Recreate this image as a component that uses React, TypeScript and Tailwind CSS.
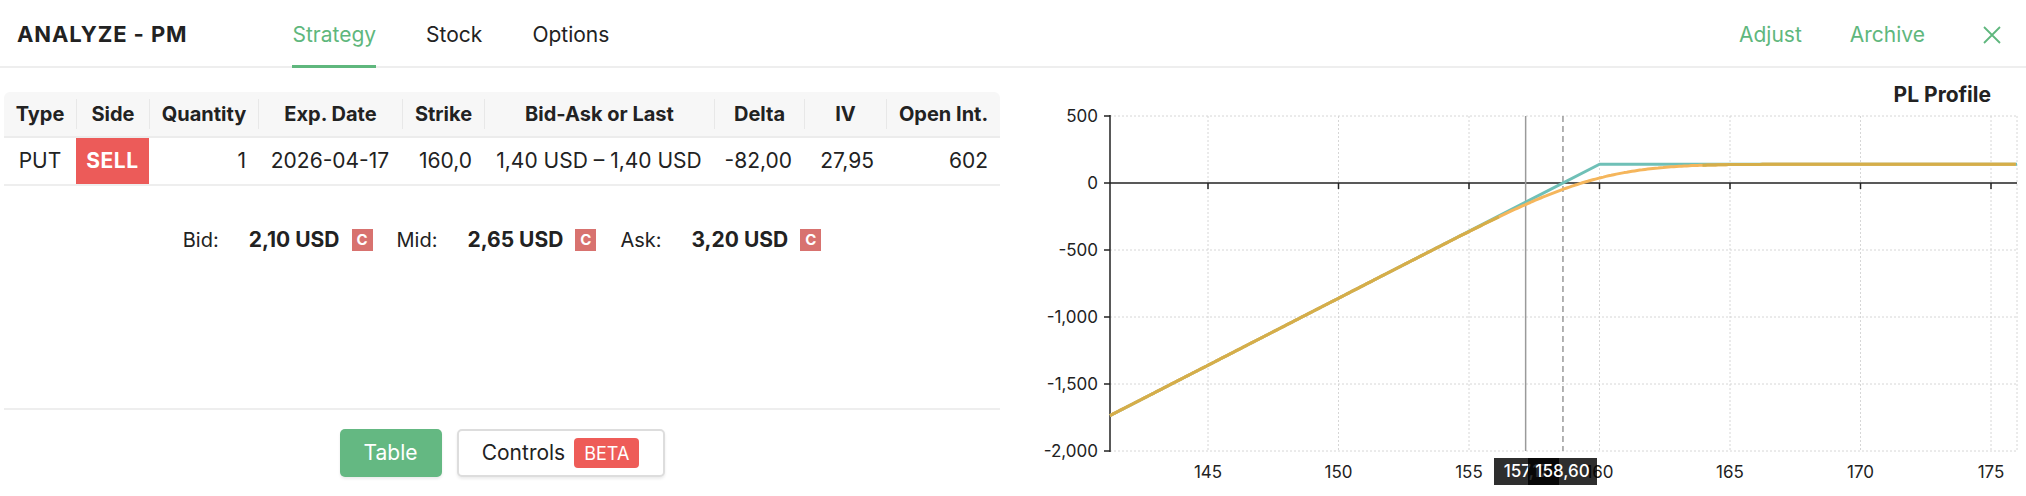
import React from 'react';

const FONT = { fontFamily: 'Inter, "Noto Sans", sans-serif' };

type Col = { label: string; w: number; align: 'center' | 'right' };

const cols: Col[] = [
  { label: 'Type', w: 72, align: 'center' },
  { label: 'Side', w: 73, align: 'center' },
  { label: 'Quantity', w: 109, align: 'right' },
  { label: 'Exp. Date', w: 144, align: 'center' },
  { label: 'Strike', w: 82, align: 'right' },
  { label: 'Bid-Ask or Last', w: 230, align: 'center' },
  { label: 'Delta', w: 90, align: 'right' },
  { label: 'IV', w: 82, align: 'right' },
  { label: 'Open Int.', w: 114, align: 'right' },
];

const row = ['PUT', 'SELL', '1', '2026-04-17', '160,0', '1,40 USD – 1,40 USD', '-82,00', '27,95', '602'];

// chart scales (page coordinates)
const X0 = 1110;
const X1 = 2017;
const Y0 = 116;
const Y1 = 451;
const sx = (v: number) => 1208 + (v - 145) * 26.1;
const sy = (v: number) => 183 - v * 0.134;
const VMIN = (X0 - 1208) / 26.1 + 145;
const VMAX = (X1 - 1208) / 26.1 + 145;

function ncdf(x: number) {
  const t = 1 / (1 + 0.2316419 * Math.abs(x));
  const d = 0.3989423 * Math.exp((-x * x) / 2);
  const p = d * t * (0.3193815 + t * (-0.3565638 + t * (1.781478 + t * (-1.821256 + t * 1.330274))));
  return x > 0 ? 1 - p : p;
}

const K = 160;
const PREM = 1.4;
const SIG_T = 0.0161;

const putValue = (s: number) => {
  const d1 = (Math.log(s / K) + 0.5 * SIG_T * SIG_T) / SIG_T;
  const d2 = d1 - SIG_T;
  return K * ncdf(-d2) - s * ncdf(-d1);
};
const expiry = (s: number) => (PREM - Math.max(K - s, 0)) * 100;
const today = (s: number) => (PREM - putValue(s)) * 100;

function PlChart() {
  const pts: { x: number; t: number; o: number }[] = [];
  for (let v = VMIN; v <= VMAX + 0.001; v += 0.1) {
    pts.push({ x: sx(v), t: sy(expiry(v)), o: sy(today(v)) });
  }
  const teal = `M${sx(VMIN)},${sy(expiry(VMIN))} L${sx(K)},${sy(expiry(K))} L${X1},${sy(expiry(VMAX))}`;
  const orange = 'M' + pts.map((p) => `${p.x.toFixed(1)},${p.o.toFixed(1)}`).join(' L');

  // where both curves coincide the line reads as a darker mustard
  const runs: string[] = [];
  let cur: string[] = [];
  pts.forEach((p) => {
    if (Math.abs(p.t - p.o) < 1) {
      cur.push(`${p.x.toFixed(1)},${p.o.toFixed(1)}`);
    } else if (cur.length) {
      if (cur.length > 1) runs.push('M' + cur.join(' L'));
      cur = [];
    }
  });
  if (cur.length > 1) runs.push('M' + cur.join(' L'));

  const yTicks = [500, 0, -500, -1000, -1500, -2000];
  const xTicks = [145, 150, 155, 160, 165, 170, 175];
  const fmt = (v: number) => (v <= -1000 ? `-${Math.floor(-v / 1000)},${String(-v % 1000).padStart(3, '0')}` : String(v));

  return (
    <svg width={1016} height={428} viewBox="1010 68 1016 428" className="block" style={FONT}>
      <text x={1991} y={102} textAnchor="end" fontSize={21} fontWeight={700} fill="#222">
        PL Profile
      </text>

      {/* grid */}
      {[500, -500, -1000, -1500, -2000].map((v) => (
        <line key={v} x1={X0} x2={X1} y1={sy(v)} y2={sy(v)} stroke="#d6d6d6" strokeDasharray="2 2" />
      ))}
      {[...xTicks.map(sx), X1].map((x) => (
        <line key={x} x1={x} x2={x} y1={Y0} y2={Y1} stroke="#d6d6d6" strokeDasharray="2 2" />
      ))}

      {/* axes */}
      <line x1={X0} x2={X0} y1={Y0 - 1} y2={Y1 + 1} stroke="#222" strokeWidth={1.5} />
      <line x1={X0} x2={X1} y1={sy(0)} y2={sy(0)} stroke="#222" strokeWidth={1.5} />
      {yTicks.map((v) => (
        <g key={v}>
          <line x1={X0 - 6} x2={X0} y1={sy(v)} y2={sy(v)} stroke="#222" strokeWidth={1.5} />
          <text x={1098} y={sy(v) + 6} textAnchor="end" fontSize={17} fill="#222">
            {fmt(v)}
          </text>
        </g>
      ))}
      {xTicks.map((v) => (
        <g key={v}>
          <line x1={sx(v)} x2={sx(v)} y1={sy(0)} y2={sy(0) + 6} stroke="#222" strokeWidth={1.5} />
          <text x={sx(v)} y={478} textAnchor="middle" fontSize={17} fill="#222">
            {v}
          </text>
        </g>
      ))}

      {/* current price and breakeven */}
      <line x1={sx(157.17)} x2={sx(157.17)} y1={Y0} y2={Y1} stroke="#9a9a9a" strokeWidth={1.5} />
      <line x1={sx(158.6)} x2={sx(158.6)} y1={Y0} y2={Y1} stroke="#9a9a9a" strokeWidth={1.5} strokeDasharray="6 4" />

      {/* payoff lines */}
      <path d={teal} fill="none" stroke="#6fc0b7" strokeWidth={3} strokeLinejoin="round" />
      <path d={orange} fill="none" stroke="#f5b65c" strokeWidth={3} strokeLinejoin="round" />
      {runs.map((d, i) => (
        <path key={i} d={d} fill="none" stroke="#d5ae4a" strokeWidth={3} strokeLinejoin="round" />
      ))}

      {/* price labels */}
      <rect x={1494} y={458} width={65} height={27} fill="#000" fillOpacity={0.82} />
      <text x={1526.5} y={477} textAnchor="middle" fontSize={17} fontWeight={500} fill="#fff">
        157,17
      </text>
      <rect x={1528} y={458} width={69} height={27} fill="#000" fillOpacity={0.82} />
      <text x={1562.5} y={477} textAnchor="middle" fontSize={17} fontWeight={500} fill="#fff">
        158,60
      </text>
    </svg>
  );
}

function Badge() {
  return (
    <span className="inline-flex h-[22px] w-[21px] items-center justify-center bg-[#d8726f] text-[15px] font-bold text-white">
      C
    </span>
  );
}

export default function App() {
  return (
    <div className="flex h-[496px] w-[2026px] flex-col overflow-hidden bg-white text-[#222]" style={FONT}>
      {/* Header */}
      <div className="flex h-[68px] shrink-0 items-stretch border-b-2 border-[#eeeeee]">
        <div className="flex items-center pl-[17px] pt-[3px] text-[22px] font-bold tracking-[0.9px]">ANALYZE - PM</div>
        <div className="ml-[105px] flex items-stretch gap-[50px] text-[21px]">
          <div className="-mb-[2px] flex items-center border-b-[3px] border-[#5fb77d] pt-[4px] text-[#5fb77d]">Strategy</div>
          <div className="flex items-center pt-[3px]">Stock</div>
          <div className="flex items-center pt-[3px]">Options</div>
        </div>
        <div className="ml-auto flex items-center gap-[48px] pr-[25px] pt-[3px] text-[21px] text-[#5fb77d]">
          <span>Adjust</span>
          <span>Archive</span>
          <svg width="18" height="18" viewBox="0 0 18 18" className="ml-[10px]">
            <path d="M1 1 L17 17 M17 1 L1 17" stroke="#5fb77d" strokeWidth="1.8" fill="none" />
          </svg>
        </div>
      </div>

      {/* Body */}
      <div className="flex min-h-0 flex-1">
        <div className="flex w-[1010px] shrink-0 flex-col pl-[4px] pr-[10px] pt-[24px]">
          {/* Table */}
          <div className="w-[996px]">
            <div className="flex h-[46px] items-center rounded-t-[6px] border-b-2 border-[#ececec] bg-[#f7f7f7] text-[20px] font-bold">
              {cols.map((c, i) => (
                <React.Fragment key={c.label}>
                  {i > 0 && <div className="h-[30px] w-px shrink-0 bg-[#e8e8e8]" />}
                  <div className="shrink-0 whitespace-nowrap text-center" style={{ width: i > 0 ? c.w - 1 : c.w }}>
                    {c.label}
                  </div>
                </React.Fragment>
              ))}
            </div>
            <div className="flex h-[48px] items-stretch border-b-2 border-[#eeeeee] text-[21px]">
              {cols.map((c, i) =>
                i === 1 ? (
                  <div key={c.label} className="flex shrink-0 items-center justify-center bg-[#ec5b59] font-bold tracking-[0.5px] text-white" style={{ width: c.w }}>
                    {row[i]}
                  </div>
                ) : (
                  <div
                    key={c.label}
                    className={`flex shrink-0 items-center whitespace-nowrap px-[12px] ${c.align === 'right' ? 'justify-end' : 'justify-center'}`}
                    style={{ width: c.w }}
                  >
                    {row[i]}
                  </div>
                ),
              )}
            </div>
          </div>

          {/* Bid / Mid / Ask */}
          <div className="mt-[43px] flex h-[22px] items-center justify-center text-[20px]">
            <span className="mr-[30px]">Bid:</span>
            <span className="mr-[12px] text-[21px] font-bold">2,10 USD</span>
            <Badge />
            <span className="ml-[24px] mr-[30px]">Mid:</span>
            <span className="mr-[12px] text-[21px] font-bold">2,65 USD</span>
            <Badge />
            <span className="ml-[24px] mr-[30px]">Ask:</span>
            <span className="mr-[12px] text-[21px] font-bold">3,20 USD</span>
            <Badge />
          </div>

          <div className="flex-1" />

          {/* Footer buttons */}
          <div className="border-t-2 border-[#eeeeee] pb-[19px] pt-[19px]">
            <div className="flex items-center justify-center gap-[15px]">
              <button className="h-[48px] w-[102px] rounded-[5px] bg-[#64b882] text-[21px] text-white shadow-[0_2px_3px_rgba(0,0,0,0.08)]">
                Table
              </button>
              <button className="flex h-[48px] w-[208px] items-center justify-center gap-[9px] rounded-[5px] border-2 border-[#dddddd] bg-white text-[21px] shadow-[0_2px_3px_rgba(0,0,0,0.08)]">
                <span>Controls</span>
                <span className="flex h-[30px] items-center rounded-[4px] bg-[#ee5c58] px-[10px] text-[18px] text-white">BETA</span>
              </button>
            </div>
          </div>
        </div>

        {/* Chart */}
        <div className="flex-1">
          <PlChart />
        </div>
      </div>
    </div>
  );
}
